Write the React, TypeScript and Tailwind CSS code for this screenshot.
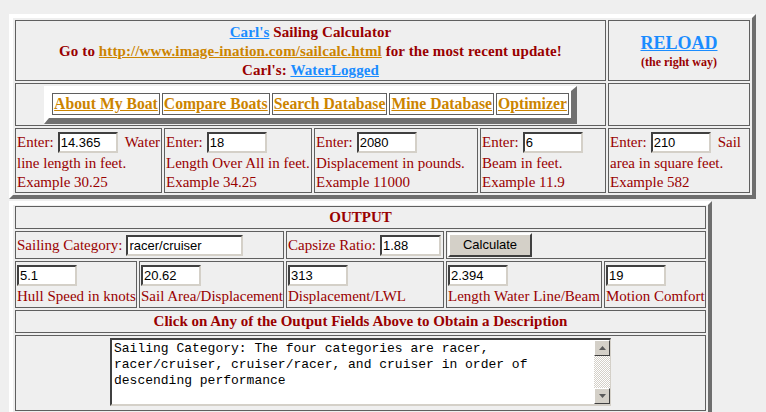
import React from "react";

type Kids = { className?: string; children?: React.ReactNode };

// Table cell with the thin dark rule used throughout the calculator
function Cell({ className = "", children }: Kids) {
  return <div className={"border border-[#5f5f5f] " + className}>{children}</div>;
}

// Sunken white text box
function Field({ value, className = "" }: { value: string; className?: string }) {
  return (
    <input
      readOnly
      defaultValue={value}
      className={
        "h-[21px] shrink-0 bg-white border-t-2 border-l-2 border-b-2 border-r-2 border-t-[#404040] border-l-[#404040] border-b-[#d4d0c8] border-r-[#d4d0c8] pl-[1px] text-[13px] text-black font-['Liberation_Sans',Arial,sans-serif] outline-none " +
        className
      }
    />
  );
}

function InputCell({ value, after, line2, example }: { value: string; after?: string; line2: string; example: string }) {
  return (
    <Cell className="pl-[1px] text-[15px] leading-[19px] text-[#990000] whitespace-nowrap">
      <div className="flex items-center h-[24px] mt-[1px]">
        <span>Enter:</span>
        <Field value={value} className="ml-[4px] w-[60px]" />
        {after ? <span className="ml-[7px]">{after}</span> : null}
      </div>
      <div>{line2}</div>
      <div>{example}</div>
    </Cell>
  );
}

function OutCell({ value, label }: { value: string; label: string }) {
  return (
    <Cell className="pl-[1px] pt-[3px] text-[15px] leading-[19px] text-[#990000] whitespace-nowrap">
      <Field value={value} className="w-[60px]" />
      <div className="mt-[1px]">{label}</div>
    </Cell>
  );
}

function Arrow({ up }: { up: boolean }) {
  return (
    <svg width="7" height="4" viewBox="0 0 7 4">
      <polygon points={up ? "3.5,0 7,4 0,4" : "0,0 7,0 3.5,4"} fill="#5a5a5a" />
    </svg>
  );
}

function ScrollButton({ up }: { up: boolean }) {
  return (
    <div className="h-[16px] bg-[#d4d0c8] border-t border-l border-t-white border-l-white border-b border-r border-b-[#404040] border-r-[#404040] flex items-center justify-center">
      <Arrow up={up} />
    </div>
  );
}

export default function App() {
  return (
    <div className="w-[766px] h-[412px] overflow-hidden bg-[#efefef] pt-[14px] pl-[9px] font-['Liberation_Serif','Times_New_Roman',serif]">
      {/* Top panel: title, menu and the five inputs */}
      <div className="w-[747px] border-[4px] border-t-white border-l-white border-r-[#6e6e6e] border-b-[#6e6e6e] p-[2px] grid grid-cols-[147px_148px_164px_126px_1fr] grid-rows-[61px_43px_65px] gap-[2px]">
        <Cell className="col-span-4 flex flex-col items-center pt-[2px] text-[15px] font-bold leading-[19px] text-[#990000] whitespace-nowrap tracking-[0.1px]">
          <div>
            <a className="text-[#1a8cff] underline">Carl's</a> Sailing Calculator
          </div>
          <div>
            Go to <a className="text-[#cc8400] underline">http://www.image-ination.com/sailcalc.html</a> for the most recent update!
          </div>
          <div>
            Carl's: <a className="text-[#1a8cff] underline">WaterLogged</a>
          </div>
        </Cell>
        <Cell className="flex flex-col items-center justify-center font-bold">
          <a className="text-[18px] leading-[22px] text-[#1a8cff] underline">RELOAD</a>
          <div className="text-[12px] leading-[16px] text-[#990000]">(the right way)</div>
        </Cell>

        <Cell className="col-span-4 flex justify-center items-start pt-[2px]">
          <div className="flex gap-[2px] bg-white border-t-[5px] border-l-[5px] border-r-[6px] border-b-[6px] border-t-white border-l-white border-r-[#707070] border-b-[#707070] pt-[2px] pl-[3px] pr-[2px] pb-[3px]">
            {["About My Boat", "Compare Boats", "Search Database", "Mine Database", "Optimizer"].map((t) => (
              <div key={t} className="border border-[#5f5f5f] px-[1px] h-[22px] leading-[20px] text-[15.7px] font-bold text-[#cc8400] underline whitespace-nowrap">
                {t}
              </div>
            ))}
          </div>
        </Cell>
        <Cell />

        <InputCell value="14.365" after="Water" line2="line length in feet." example="Example 30.25" />
        <InputCell value="18" line2="Length Over All in feet." example="Example 34.25" />
        <InputCell value="2080" line2="Displacement in pounds." example="Example 11000" />
        <InputCell value="6" line2="Beam in feet." example="Example 11.9" />
        <InputCell value="210" after="Sail" line2="area in square feet." example="Example 582" />
      </div>

      {/* Output panel */}
      <div className="mt-[2px] w-[703px] border-[4px] border-t-white border-l-white border-r-[#6e6e6e] border-b-[#6e6e6e] pt-[1px] px-[2px] pb-[2px] grid grid-cols-[122px_145px_158px_156px_1fr] grid-rows-[23px_28px_47px_23px_76px] gap-[2px]">
        <Cell className="col-span-5 flex items-center justify-center text-[15px] font-bold text-[#990000]">OUTPUT</Cell>

        <Cell className="col-span-2 flex items-center pl-[1px] text-[15px] text-[#990000] whitespace-nowrap">
          <span>Sailing Category:</span>
          <Field value="racer/cruiser" className="ml-[4px] w-[117px]" />
        </Cell>
        <Cell className="flex items-center pl-[1px] text-[15px] text-[#990000] whitespace-nowrap">
          <span>Capsize Ratio:</span>
          <Field value="1.88" className="ml-[4px] w-[61px]" />
        </Cell>
        <Cell className="col-span-2 flex items-center pl-[1px]">
          <button className="w-[84px] h-[24px] bg-[#d4d0c8] border-t-2 border-l-2 border-t-white border-l-white border-b-2 border-r-2 border-b-[#404040] border-r-[#404040] text-[13px] text-black font-['Liberation_Sans',Arial,sans-serif]">
            Calculate
          </button>
        </Cell>

        <OutCell value="5.1" label="Hull Speed in knots" />
        <OutCell value="20.62" label="Sail Area/Displacement" />
        <OutCell value="313" label="Displacement/LWL" />
        <OutCell value="2.394" label="Length Water Line/Beam" />
        <OutCell value="19" label="Motion Comfort" />

        <Cell className="col-span-5 flex items-center justify-center text-[15px] font-bold text-[#990000] whitespace-nowrap">
          Click on Any of the Output Fields Above to Obtain a Description
        </Cell>

        <Cell className="col-span-5 flex justify-center items-start pt-[2px]">
          <div className="w-[501px] h-[68px] bg-white flex border-t-2 border-l-2 border-t-[#404040] border-l-[#404040] border-b-2 border-b-[#d4d0c8] border-r border-r-[#d4d0c8]">
            <div className="flex-1 pl-[2px] pt-[1px] pr-[2px] font-['Liberation_Mono','Courier_New',monospace] text-[13px] leading-[16px] text-black">
              Sailing Category: The four categories are racer, racer/cruiser, cruiser/racer, and cruiser in order of descending performance
            </div>
            <div className="w-[16px] flex flex-col">
              <ScrollButton up />
              <div className="flex-1 bg-[image:repeating-conic-gradient(#d4d0c8_0%_25%,#ffffff_0%_50%)] bg-[length:2px_2px]" />
              <ScrollButton up={false} />
            </div>
          </div>
        </Cell>
      </div>
    </div>
  );
}
